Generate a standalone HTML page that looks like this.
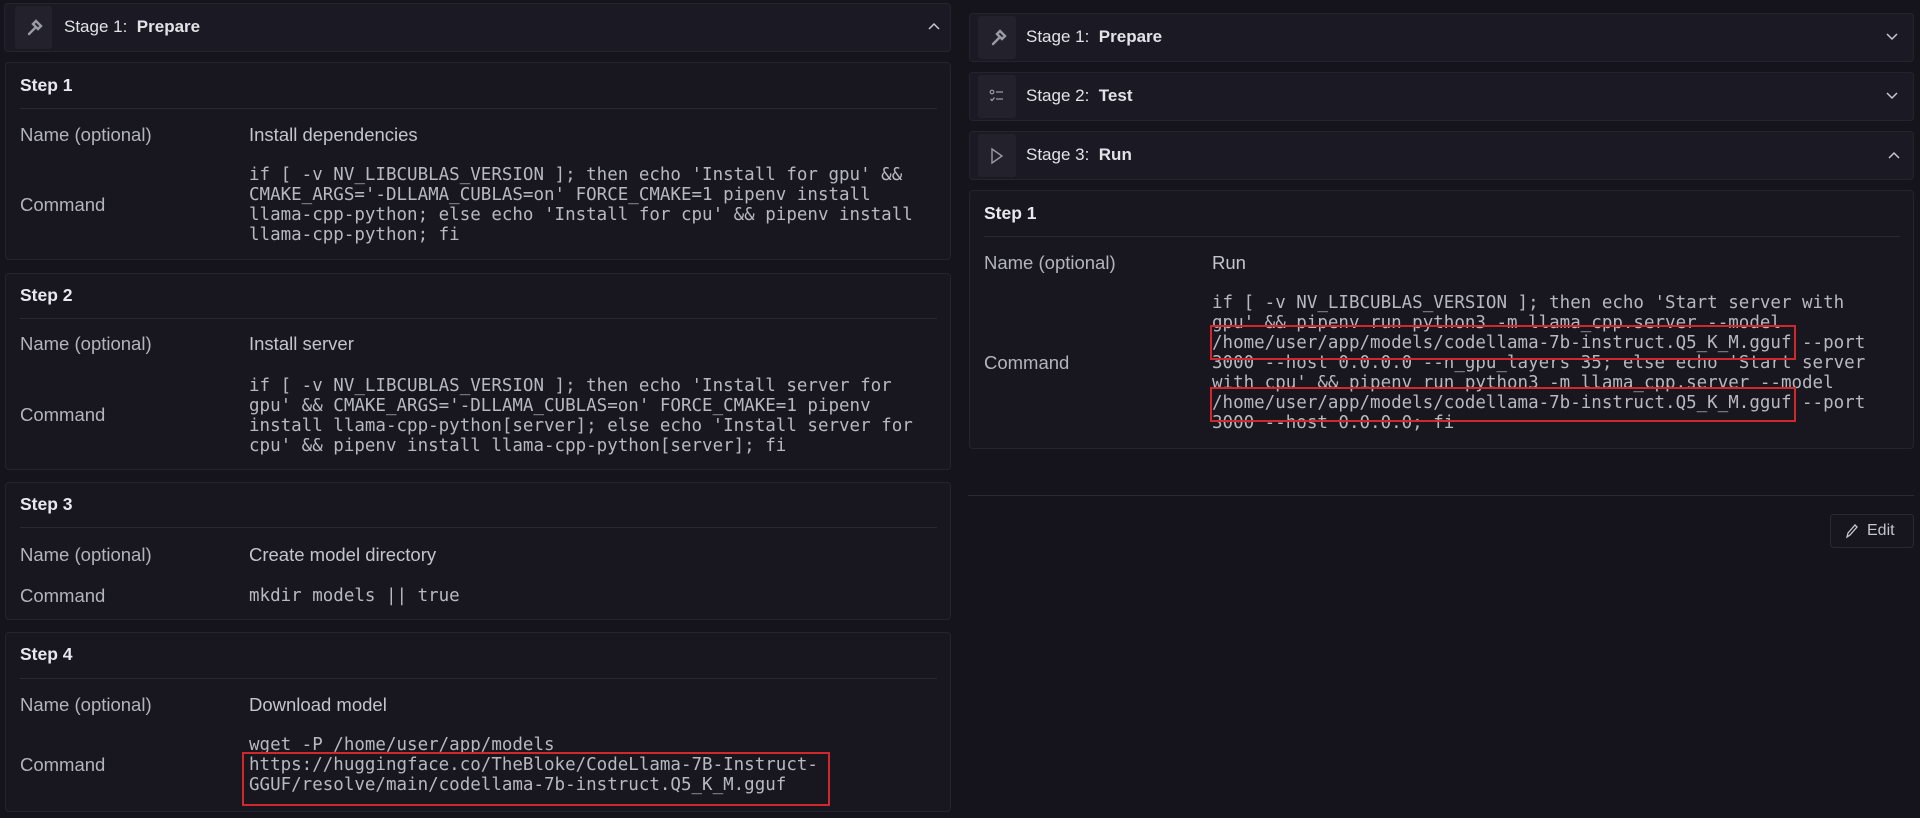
<!DOCTYPE html>
<html><head><meta charset="utf-8"><style>
*{margin:0;padding:0;box-sizing:border-box}
body{width:1920px;height:818px;background:#15141c;position:relative;overflow:hidden;font-family:"Liberation Sans",sans-serif;color:#d4d4da}
.a{position:absolute}
.hdr{position:absolute;background:#1b1a24;border:1px solid #25242e;border-radius:4px}
.ib{position:absolute;background:#23222c;border-radius:3px}
.ht{position:absolute;font-size:17px;color:#e2e2e8;line-height:20px}
.card{position:absolute;background:#18171f;border:1px solid #25242d;border-radius:4px}
.st{position:absolute;font-size:17.5px;font-weight:bold;color:#e8e8ee;line-height:20px}
.dv{position:absolute;height:1px;background:#2a2933}
.lb{position:absolute;font-size:18.5px;color:#b4b4bc;line-height:20px}
.vl{position:absolute;font-size:18.5px;color:#c4c4cc;line-height:20px}
.mono{position:absolute;font-family:"DejaVu Sans Mono","Liberation Mono",monospace;font-size:17.5px;line-height:20px;color:#b8b8c0;white-space:pre}
.rb{position:absolute;border:2px solid #d0282c}
</style></head><body>

<!-- LEFT -->
<div class="hdr" style="left:4px;top:3px;width:947px;height:49px"></div>
<div class="ib" style="left:15px;top:6px;width:37px;height:43px"></div>
<svg class="a" style="left:22px;top:17px" width="22" height="22" viewBox="0 0 22 22"><path d="M7 17l6-6M11 7l5 5 3-3-5-5z" stroke="#9a9aa4" stroke-width="2.4" fill="none" stroke-linecap="round"/></svg>
<div class="ht" style="left:64px;top:17px">Stage 1:&nbsp; <b>Prepare</b></div>
<svg class="a" style="left:928px;top:22px" width="12" height="8"><path d="M1 7l5-5 5 5" stroke="#c8c8d0" stroke-width="1.5" fill="none"/></svg>

<div class="card" style="left:5px;top:62px;width:946px;height:198px"></div>
<div class="st" style="left:20px;top:75px">Step 1</div>
<div class="dv" style="left:20px;top:108px;width:917px"></div>
<div class="lb" style="left:20px;top:125px">Name (optional)</div>
<div class="vl" style="left:249px;top:125px">Install dependencies</div>
<div class="lb" style="left:20px;top:195px">Command</div>
<div class="mono" style="left:249px;top:165px">if [ -v NV_LIBCUBLAS_VERSION ]; then echo 'Install for gpu' &amp;&amp;
CMAKE_ARGS='-DLLAMA_CUBLAS=on' FORCE_CMAKE=1 pipenv install
llama-cpp-python; else echo 'Install for cpu' &amp;&amp; pipenv install
llama-cpp-python; fi</div>

<div class="card" style="left:5px;top:273px;width:946px;height:197px"></div>
<div class="st" style="left:20px;top:285px">Step 2</div>
<div class="dv" style="left:20px;top:318px;width:917px"></div>
<div class="lb" style="left:20px;top:334px">Name (optional)</div>
<div class="vl" style="left:249px;top:334px">Install server</div>
<div class="lb" style="left:20px;top:405px">Command</div>
<div class="mono" style="left:249px;top:376px">if [ -v NV_LIBCUBLAS_VERSION ]; then echo 'Install server for
gpu' &amp;&amp; CMAKE_ARGS='-DLLAMA_CUBLAS=on' FORCE_CMAKE=1 pipenv
install llama-cpp-python[server]; else echo 'Install server for
cpu' &amp;&amp; pipenv install llama-cpp-python[server]; fi</div>

<div class="card" style="left:5px;top:482px;width:946px;height:138px"></div>
<div class="st" style="left:20px;top:494px">Step 3</div>
<div class="dv" style="left:20px;top:527px;width:917px"></div>
<div class="lb" style="left:20px;top:545px">Name (optional)</div>
<div class="vl" style="left:249px;top:545px">Create model directory</div>
<div class="lb" style="left:20px;top:586px">Command</div>
<div class="mono" style="left:249px;top:586px">mkdir models || true</div>

<div class="card" style="left:5px;top:632px;width:946px;height:180px"></div>
<div class="st" style="left:20px;top:644px">Step 4</div>
<div class="dv" style="left:20px;top:678px;width:917px"></div>
<div class="lb" style="left:20px;top:695px">Name (optional)</div>
<div class="vl" style="left:249px;top:695px">Download model</div>
<div class="lb" style="left:20px;top:755px">Command</div>
<div class="mono" style="left:249px;top:735px">wget -P /home/user/app/models
https://huggingface.co/TheBloke/CodeLlama-7B-Instruct-
GGUF/resolve/main/codellama-7b-instruct.Q5_K_M.gguf</div>
<div class="rb" style="left:242px;top:752px;width:588px;height:54px"></div>

<!-- RIGHT -->
<div class="hdr" style="left:969px;top:13px;width:945px;height:49px"></div>
<div class="ib" style="left:978px;top:16px;width:38px;height:43px"></div>
<svg class="a" style="left:986px;top:27px" width="22" height="22" viewBox="0 0 22 22"><path d="M7 17l6-6M11 7l5 5 3-3-5-5z" stroke="#9a9aa4" stroke-width="2.4" fill="none" stroke-linecap="round"/></svg>
<div class="ht" style="left:1026px;top:27px">Stage 1:&nbsp; <b>Prepare</b></div>
<svg class="a" style="left:1886px;top:33px" width="12" height="8"><path d="M1 1l5 5 5-5" stroke="#c8c8d0" stroke-width="1.5" fill="none"/></svg>

<div class="hdr" style="left:969px;top:72px;width:945px;height:49px"></div>
<div class="ib" style="left:978px;top:75px;width:38px;height:43px"></div>
<svg class="a" style="left:989px;top:88px" width="16" height="16" viewBox="0 0 16 16"><circle cx="3" cy="4" r="1.8" stroke="#9a9aa4" fill="none" stroke-width="1.2"/><path d="M7 4h7M1.5 11l1.5 1.5 2.5-3M7 11h7" stroke="#9a9aa4" stroke-width="1.3" fill="none"/></svg>
<div class="ht" style="left:1026px;top:86px">Stage 2:&nbsp; <b>Test</b></div>
<svg class="a" style="left:1886px;top:92px" width="12" height="8"><path d="M1 1l5 5 5-5" stroke="#c8c8d0" stroke-width="1.5" fill="none"/></svg>

<div class="hdr" style="left:969px;top:131px;width:945px;height:49px"></div>
<div class="ib" style="left:978px;top:134px;width:38px;height:43px"></div>
<svg class="a" style="left:990px;top:147px" width="14" height="18" viewBox="0 0 14 18"><path d="M2 2l10 7-10 7z" stroke="#9a9aa4" stroke-width="1.4" fill="none"/></svg>
<div class="ht" style="left:1026px;top:145px">Stage 3:&nbsp; <b>Run</b></div>
<svg class="a" style="left:1888px;top:151px" width="12" height="8"><path d="M1 7l5-5 5 5" stroke="#c8c8d0" stroke-width="1.5" fill="none"/></svg>

<div class="card" style="left:969px;top:190px;width:945px;height:259px"></div>
<div class="st" style="left:984px;top:203px">Step 1</div>
<div class="dv" style="left:984px;top:236px;width:916px"></div>
<div class="lb" style="left:984px;top:253px">Name (optional)</div>
<div class="vl" style="left:1212px;top:253px">Run</div>
<div class="lb" style="left:984px;top:353px">Command</div>
<div class="mono" style="left:1212px;top:293px">if [ -v NV_LIBCUBLAS_VERSION ]; then echo 'Start server with
gpu' &amp;&amp; pipenv run python3 -m llama_cpp.server --model
/home/user/app/models/codellama-7b-instruct.Q5_K_M.gguf --port
3000 --host 0.0.0.0 --n_gpu_layers 35; else echo 'Start server
with cpu' &amp;&amp; pipenv run python3 -m llama_cpp.server --model
/home/user/app/models/codellama-7b-instruct.Q5_K_M.gguf --port
3000 --host 0.0.0.0; fi</div>
<div class="rb" style="left:1210px;top:325px;width:586px;height:35px"></div>
<div class="rb" style="left:1210px;top:387px;width:586px;height:35px"></div>

<div class="dv" style="left:968px;top:495px;width:946px"></div>
<div class="a" style="left:1830px;top:514px;width:84px;height:34px;border:1px solid #2a2933;border-radius:4px;background:#17161e"></div>
<svg class="a" style="left:1844px;top:523px" width="14" height="16" viewBox="0 0 14 16"><path d="M3 14l1-4 7-8 2 2-7 8z" stroke="#c8c8d0" stroke-width="1.3" fill="none"/></svg>
<div class="vl" style="left:1867px;top:521px;font-size:16px">Edit</div>
</body></html>
